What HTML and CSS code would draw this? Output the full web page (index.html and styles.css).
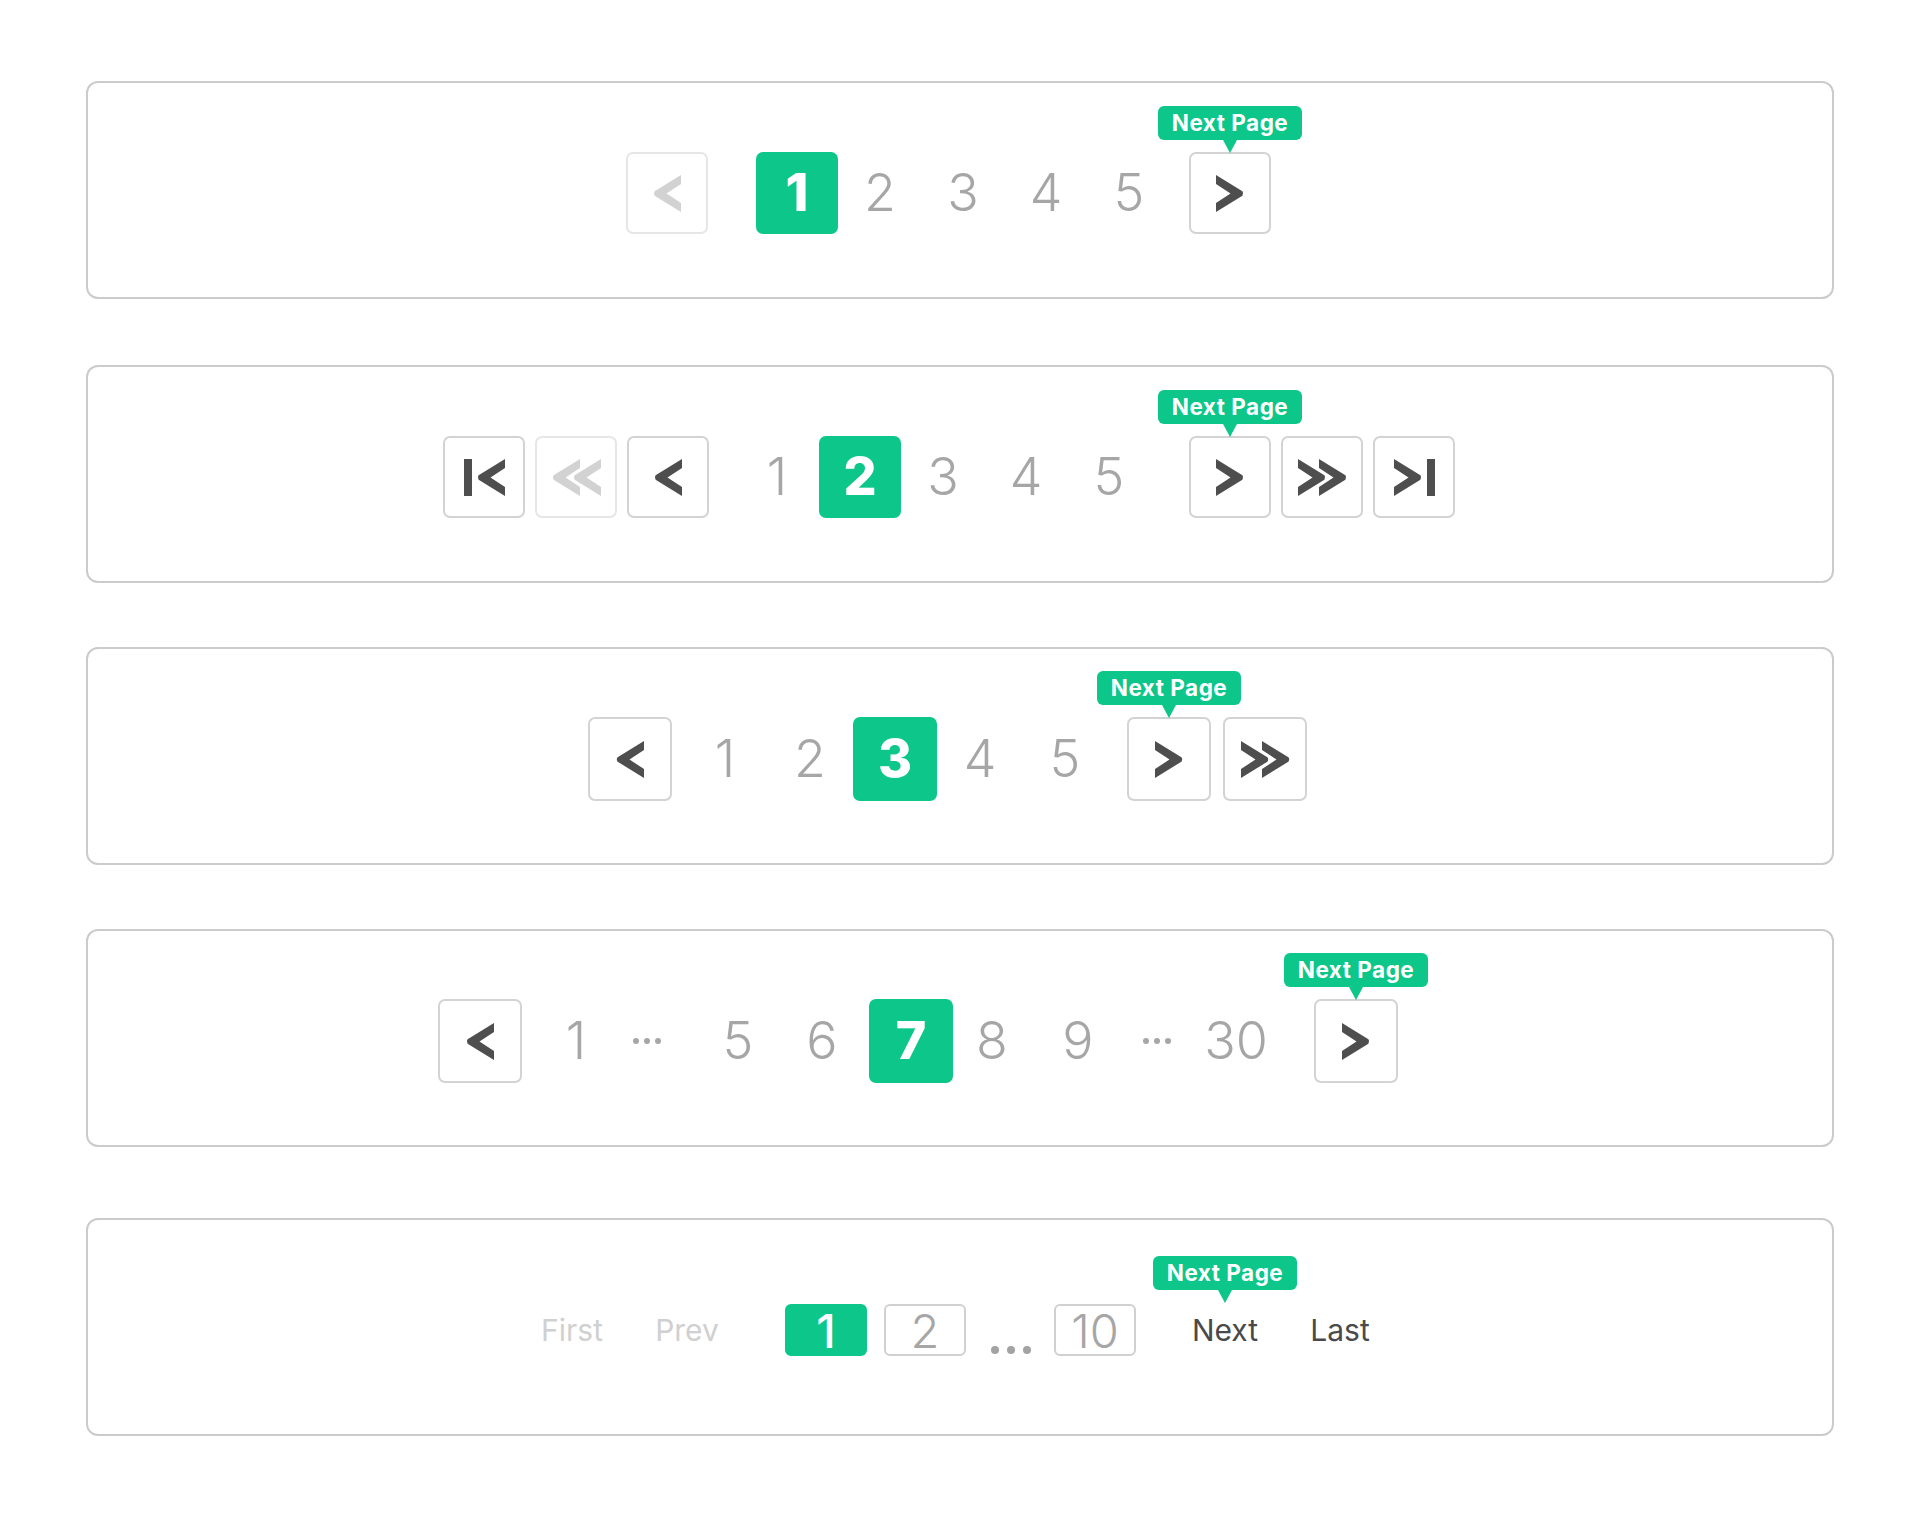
FILE: index.html
```html
<!DOCTYPE html>
<html lang="en">
<head>
<meta charset="utf-8">
<title>Pagination</title>
<link rel="stylesheet" href="styles.css">
</head>
<body>
<svg class="defs" width="0" height="0" aria-hidden="true">
  <symbol id="chev-r" viewBox="0 0 28 37"><path d="M0 0 L26.4 16.3 Q28 18.5 26.4 20.7 L0 37 L0 28 L14.5 18.5 L0 9 Z" fill="currentColor"/></symbol>
  <symbol id="chev-l" viewBox="0 0 28 37"><path d="M28 0 L1.6 16.3 Q0 18.5 1.6 20.7 L28 37 L28 28 L13.5 18.5 L28 9 Z" fill="currentColor"/></symbol>
  <symbol id="dbl-r" viewBox="0 0 49 37"><path d="M0 0 L26.4 16.3 Q28 18.5 26.4 20.7 L0 37 L0 28 L14.5 18.5 L0 9 Z M21 0 L47.4 16.3 Q49 18.5 47.4 20.7 L21 37 L21 28 L35.5 18.5 L21 9 Z" fill="currentColor"/></symbol>
  <symbol id="dbl-l" viewBox="0 0 49 37"><path d="M28 0 L1.6 16.3 Q0 18.5 1.6 20.7 L28 37 L28 28 L13.5 18.5 L28 9 Z M49 0 L22.6 16.3 Q21 18.5 22.6 20.7 L49 37 L49 28 L34.5 18.5 L49 9 Z" fill="currentColor"/></symbol>
  <symbol id="first" viewBox="0 0 41 37"><rect x="0" y="0" width="8" height="37" fill="currentColor"/><path d="M41 0 L14.6 16.3 Q13 18.5 14.6 20.7 L41 37 L41 28 L26.5 18.5 L41 9 Z" fill="currentColor"/></symbol>
  <symbol id="last" viewBox="0 0 41 37"><path d="M0 0 L26.4 16.3 Q28 18.5 26.4 20.7 L0 37 L0 28 L14.5 18.5 L0 9 Z" fill="currentColor"/><rect x="33" y="0" width="8" height="37" fill="currentColor"/></symbol>
</svg>

<main class="page">

  <section class="card card-1">
    <nav class="pager pager-1">
      <span class="btn is-disabled"><svg class="ico"><use href="#chev-l"/></svg></span>
      <span class="num is-active ml-48">1</span>
      <span class="num ml-1">2</span>
      <span class="num ml-1">3</span>
      <span class="num ml-1">4</span>
      <span class="num ml-1">5</span>
      <span class="btn ml-19"><svg class="ico"><use href="#chev-r"/></svg><span class="tip">Next Page</span></span>
    </nav>
  </section>

  <section class="card card-2">
    <nav class="pager pager-2">
      <span class="btn"><svg class="ico ico-bar"><use href="#first"/></svg></span>
      <span class="btn is-disabled ml-10"><svg class="ico ico-dbl"><use href="#dbl-l"/></svg></span>
      <span class="btn ml-10"><svg class="ico"><use href="#chev-l"/></svg></span>
      <span class="num ml-27">1</span>
      <span class="num is-active ml-1">2</span>
      <span class="num ml-1">3</span>
      <span class="num ml-1">4</span>
      <span class="num ml-1">5</span>
      <span class="btn ml-39"><svg class="ico"><use href="#chev-r"/></svg><span class="tip">Next Page</span></span>
      <span class="btn ml-10"><svg class="ico ico-dbl"><use href="#dbl-r"/></svg></span>
      <span class="btn ml-10"><svg class="ico ico-bar"><use href="#last"/></svg></span>
    </nav>
  </section>

  <section class="card card-3">
    <nav class="pager pager-3">
      <span class="btn lg"><svg class="ico"><use href="#chev-l"/></svg></span>
      <span class="num lg ml-11">1</span>
      <span class="num lg ml-1">2</span>
      <span class="num lg is-active ml-1">3</span>
      <span class="num lg ml-1">4</span>
      <span class="num lg ml-1">5</span>
      <span class="btn lg ml-20"><svg class="ico"><use href="#chev-r"/></svg><span class="tip">Next Page</span></span>
      <span class="btn lg ml-12"><svg class="ico ico-dbl"><use href="#dbl-r"/></svg></span>
    </nav>
  </section>

  <section class="card card-4">
    <nav class="pager pager-4">
      <span class="btn lg"><svg class="ico"><use href="#chev-l"/></svg></span>
      <span class="num lg narrow ml-24">1</span>
      <span class="ellipsis ml-16"><i></i><i></i><i></i></span>
      <span class="num lg narrow ml-36">5</span>
      <span class="num lg narrow ml-24">6</span>
      <span class="num lg is-active ml-17">7</span>
      <span class="num lg narrow ml-9">8</span>
      <span class="num lg narrow ml-26">9</span>
      <span class="ellipsis ml-24"><i></i><i></i><i></i></span>
      <span class="num lg wide ml-14">30</span>
      <span class="btn lg ml-38"><svg class="ico"><use href="#chev-r"/></svg><span class="tip">Next Page</span></span>
    </nav>
  </section>

  <section class="card card-5">
    <nav class="pager pager-5">
      <span class="word is-muted">First</span>
      <span class="word is-muted ml-25">Prev</span>
      <span class="page-box is-active ml-53">1</span>
      <span class="page-box ml-17">2</span>
      <span class="dots ml-25"><i></i><i></i><i></i></span>
      <span class="page-box ml-23">10</span>
      <span class="word ml-44">Next<span class="tip">Next Page</span></span>
      <span class="word ml-25">Last</span>
    </nav>
  </section>

</main>
</body>
</html>
```

FILE: styles.css
```css
* {
  box-sizing: border-box;
}

html, body {
  margin: 0;
  background: #ffffff;
}

body {
  font-family: Inter, "Noto Sans", "Liberation Sans", sans-serif;
  width: 1920px;
  height: 1520px;
}

.defs {
  position: absolute;
  width: 0;
  height: 0;
  overflow: hidden;
}

.page {
  display: flex;
  flex-direction: column;
  padding: 81px 86px 0;
}

.card {
  height: 218px;
  border: 2px solid #cbcbcb;
  border-radius: 12px;
  display: flex;
  align-items: center;
  padding-top: 6px;
}

.card-2 { margin-top: 66px; }
.card-3 { margin-top: 64px; }
.card-4 { margin-top: 64px; }
.card-5 { margin-top: 71px; }

.pager {
  display: flex;
  align-items: center;
}

.pager-1 { padding-left: 538px; }
.pager-2 { padding-left: 355px; }
.pager-3 { padding-left: 500px; }
.pager-4 { padding-left: 350px; }
.pager-5 { padding-left: 439px; }

/* icon buttons */
.btn {
  position: relative;
  flex: none;
  width: 82px;
  height: 82px;
  border: 2px solid #d3d3d3;
  border-radius: 7px;
  background: #ffffff;
  color: #4e4e4e;
  display: flex;
  align-items: center;
  justify-content: center;
}

.btn.lg {
  width: 84px;
  height: 84px;
}

.btn.is-disabled {
  border-color: #e6e6e6;
  color: #d2d2d2;
}

.ico {
  width: 28px;
  height: 37px;
}

.ico-dbl {
  width: 49px;
  height: 37px;
}

.ico-bar {
  width: 41px;
  height: 37px;
}

/* page numbers */
.num {
  flex: none;
  width: 82px;
  height: 82px;
  display: flex;
  align-items: center;
  justify-content: center;
  font-size: 52px;
  font-weight: 300;
  line-height: 1;
  color: #a6a6a6;
}

.num.lg {
  width: 84px;
  height: 84px;
}

.num.narrow { width: 60px; }
.num.wide { width: 80px; }

.num.is-active {
  background: #0cc68a;
  color: #ffffff;
  font-weight: 800;
  border-radius: 7px;
}

.ellipsis {
  flex: none;
  width: 50px;
  display: flex;
  justify-content: center;
  gap: 5px;
}

.ellipsis i {
  display: block;
  width: 6px;
  height: 6px;
  border-radius: 50%;
  background: #a6a6a6;
}

/* text pager */
.word {
  position: relative;
  flex: none;
  width: 90px;
  height: 52px;
  display: flex;
  align-items: center;
  justify-content: center;
  font-size: 30px;
  font-weight: 400;
  color: #4a4a4a;
}

.word.is-muted {
  color: #d0d0d0;
}

.page-box {
  flex: none;
  width: 82px;
  height: 52px;
  border: 2px solid #d0d0d0;
  border-radius: 6px;
  display: flex;
  align-items: center;
  justify-content: center;
  font-size: 47px;
  font-weight: 300;
  line-height: 1;
  color: #a6a6a6;
}

.page-box.is-active {
  background: #0cc68a;
  border-color: #0cc68a;
  color: #ffffff;
  font-weight: 500;
}

.dots {
  flex: none;
  align-self: flex-end;
  width: 40px;
  height: 52px;
  padding-bottom: 2px;
  display: flex;
  align-items: flex-end;
  justify-content: center;
  gap: 8px;
}

.dots i {
  display: block;
  width: 8px;
  height: 8px;
  border-radius: 50%;
  background: #a3a3a3;
}

/* tooltip */
.tip {
  position: absolute;
  left: 50%;
  bottom: calc(100% + 14px);
  transform: translateX(-50%);
  width: 144px;
  height: 34px;
  border-radius: 6px;
  background: #0cc68a;
  color: #ffffff;
  font-size: 22.5px;
  font-weight: 700;
  letter-spacing: 0.5px;
  line-height: 34px;
  text-align: center;
  white-space: nowrap;
}

.tip::after {
  content: "";
  position: absolute;
  left: 50%;
  top: 100%;
  transform: translateX(-50%);
  border-left: 7px solid transparent;
  border-right: 7px solid transparent;
  border-top: 13px solid #0cc68a;
}

/* spacing modifiers */
.ml-1 { margin-left: 1px; }
.ml-9 { margin-left: 9px; }
.ml-10 { margin-left: 10px; }
.ml-11 { margin-left: 11px; }
.ml-12 { margin-left: 12px; }
.ml-14 { margin-left: 14px; }
.ml-16 { margin-left: 16px; }
.ml-17 { margin-left: 17px; }
.ml-19 { margin-left: 19px; }
.ml-20 { margin-left: 20px; }
.ml-23 { margin-left: 23px; }
.ml-24 { margin-left: 24px; }
.ml-25 { margin-left: 25px; }
.ml-26 { margin-left: 26px; }
.ml-27 { margin-left: 27px; }
.ml-36 { margin-left: 36px; }
.ml-38 { margin-left: 38px; }
.ml-39 { margin-left: 39px; }
.ml-44 { margin-left: 44px; }
.ml-48 { margin-left: 48px; }
.ml-53 { margin-left: 53px; }
```
